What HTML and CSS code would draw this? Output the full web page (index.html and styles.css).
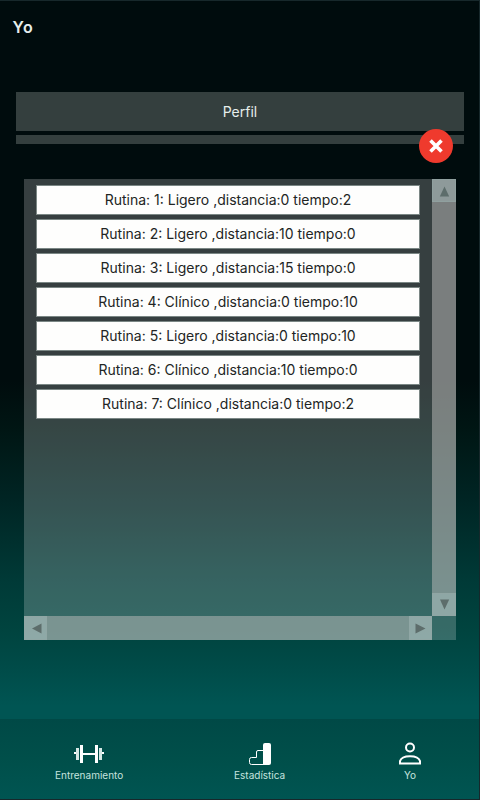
FILE: index.html
```
<!DOCTYPE html>
<html lang="es">
<head>
<meta charset="utf-8">
<title>Yo</title>
<link rel="stylesheet" href="styles.css">
</head>
<body>
<div class="app">
  <header class="title">Yo</header>
  <main class="content">
    <div class="profile">Perfil</div>
    <div class="strip">
      <button class="close" aria-label="Cerrar"><svg width="16" height="16" viewBox="0 0 16 16"><path d="M2.500 2.500l11 11M13.500 2.500l-11 11"/></svg></button>
    </div>
    <section class="panel">
      <div class="list">
        <div class="row">Rutina: 1: Ligero ,distancia:0 tiempo:2</div>
        <div class="row">Rutina: 2: Ligero ,distancia:10 tiempo:0</div>
        <div class="row">Rutina: 3: Ligero ,distancia:15 tiempo:0</div>
        <div class="row">Rutina: 4: Clínico ,distancia:0 tiempo:10</div>
        <div class="row">Rutina: 5: Ligero ,distancia:0 tiempo:10</div>
        <div class="row">Rutina: 6: Clínico ,distancia:10 tiempo:0</div>
        <div class="row">Rutina: 7: Clínico ,distancia:0 tiempo:2</div>
      </div>
      <div class="bar vertical">
        <span class="arrow"><svg width="24" height="23" viewBox="0 0 24 23"><path d="M12.500 7.500l4.700 10H7.800z"/></svg></span>
        <span class="arrow"><svg width="24" height="23" viewBox="0 0 24 23"><path d="M12.500 16.500L8 6.500h9.200z"/></svg></span>
      </div>
      <div class="bar horizontal">
        <span class="arrow"><svg width="23" height="24" viewBox="0 0 23 24"><path d="M8 12.500l9.500-5v10z"/></svg></span>
        <span class="arrow"><svg width="23" height="24" viewBox="0 0 23 24"><path d="M16.500 12.500L6.500 7.500v10z"/></svg></span>
      </div>
    </section>
  </main>
  <nav class="nav">
    <a class="tab training"><svg width="30" height="24" viewBox="0 0 30 24"><path fill="#fff" d="M6 3h3v8h12V3h3v18h-3v-8H9v8H6zM25 10h5v2h-5zM0 10h5v2H0z"/><path fill="#d5e8e5" d="M2 6h3v12H2zM25 6h3v12h-3z"/></svg><span>Entrenamiento</span></a>
    <a class="tab stats"><svg width="26" height="24" viewBox="0 0 26 24"><path fill="none" stroke="#fff" d="M16 8.500h-5q-1.500 0-1.500 1.500v5.500h-5q-2 0-2 2v3q0 2 2 2H16"/><path fill="#fff" d="M16 3q0-2 2-2h4q2 0 2 2v18q0 2-2 2h-6z"/></svg><span>Estadística</span></a>
    <a class="tab me"><svg width="24" height="24" viewBox="0 0 24 24"><g fill="none" stroke="#fff" stroke-width="2"><circle cx="12" cy="5.500" r="4"/><path d="M2 21.500v-2.500C4 12.500 20 12.500 22 19V21.500z"/></g></svg><span>Yo</span></a>
  </nav>
</div>
</body>
</html>
```
FILE: styles.css
```
* { box-sizing: border-box; }
body { margin: 0; font-family: Inter, sans-serif; }
.app {
  width: 480px;
  height: 800px;
  display: flex;
  flex-direction: column;
  color: #e6eeec;
  border: solid #17282b;
  border-width: 1px 1px 1px 0;
  background: linear-gradient(#000c0d 0, #000c0d 380px, #001614 430px, #002524 500px, #003a37 580px, #00443f 630px, #004b48 665px, #005553 705px, #005553 800px);
}
.title { height: 91px; padding: 15px 12.500px; font-size: 16px; line-height: 22px; font-weight: 600; letter-spacing: .7px; }
.content { flex: 1; padding: 0 15px 0 16px; }
.profile {
  height: 39px;
  background: #343f3e;
  font-size: 14px;
  line-height: 39px;
  text-align: center;
}
.strip { position: relative; height: 9px; margin-top: 4px; background: #343f3e; }
.close {
  position: absolute;
  right: 11px;
  top: -6px;
  width: 34px;
  height: 34px;
  padding: 0;
  border: 0;
  border-radius: 50%;
  background: #ef3a2d;
  display: grid;
  place-items: center;
}
.close path { fill: none; stroke: #fff; stroke-width: 3.6; }
.panel {
  display: grid;
  grid-template-columns: 408px 24px;
  grid-template-rows: 437px 24px;
  width: 432px;
  margin: 35px 8px 0;
  background: rgba(255, 255, 255, .21);
}
.list { display: flex; flex-direction: column; gap: 4px; padding: 6px 12px; }
.row {
  height: 30px;
  border: 1px solid #7b8785;
  background: #fefefd;
  color: #222524;
  font-size: 14px;
  line-height: 27px;
  text-align: center;
}
.bar { display: flex; justify-content: space-between; background: rgba(190, 190, 187, .5); }
.vertical { flex-direction: column; }
.arrow { display: flex; background: rgba(180, 205, 206, .35); border: 1px solid rgba(145, 165, 164, .5); }
.vertical .arrow { height: 23px; }
.horizontal .arrow { width: 23px; }
.arrow svg { display: block; margin: -1px; flex: none; }
.arrow path { fill: #5d6d6b; }
.nav {
  height: 80px;
  display: flex;
  justify-content: space-between;
  padding: 23px 57px 0 55px;
  background: linear-gradient(#004946, #004f4a 50%, #005552);
}
.tab { display: flex; flex-direction: column; align-items: center; font-size: 10px; line-height: 14px; color: #c5e3df; }
.stats { position: relative; left: -1px; }
.tab svg { display: block; margin-bottom: 2px; }
```
